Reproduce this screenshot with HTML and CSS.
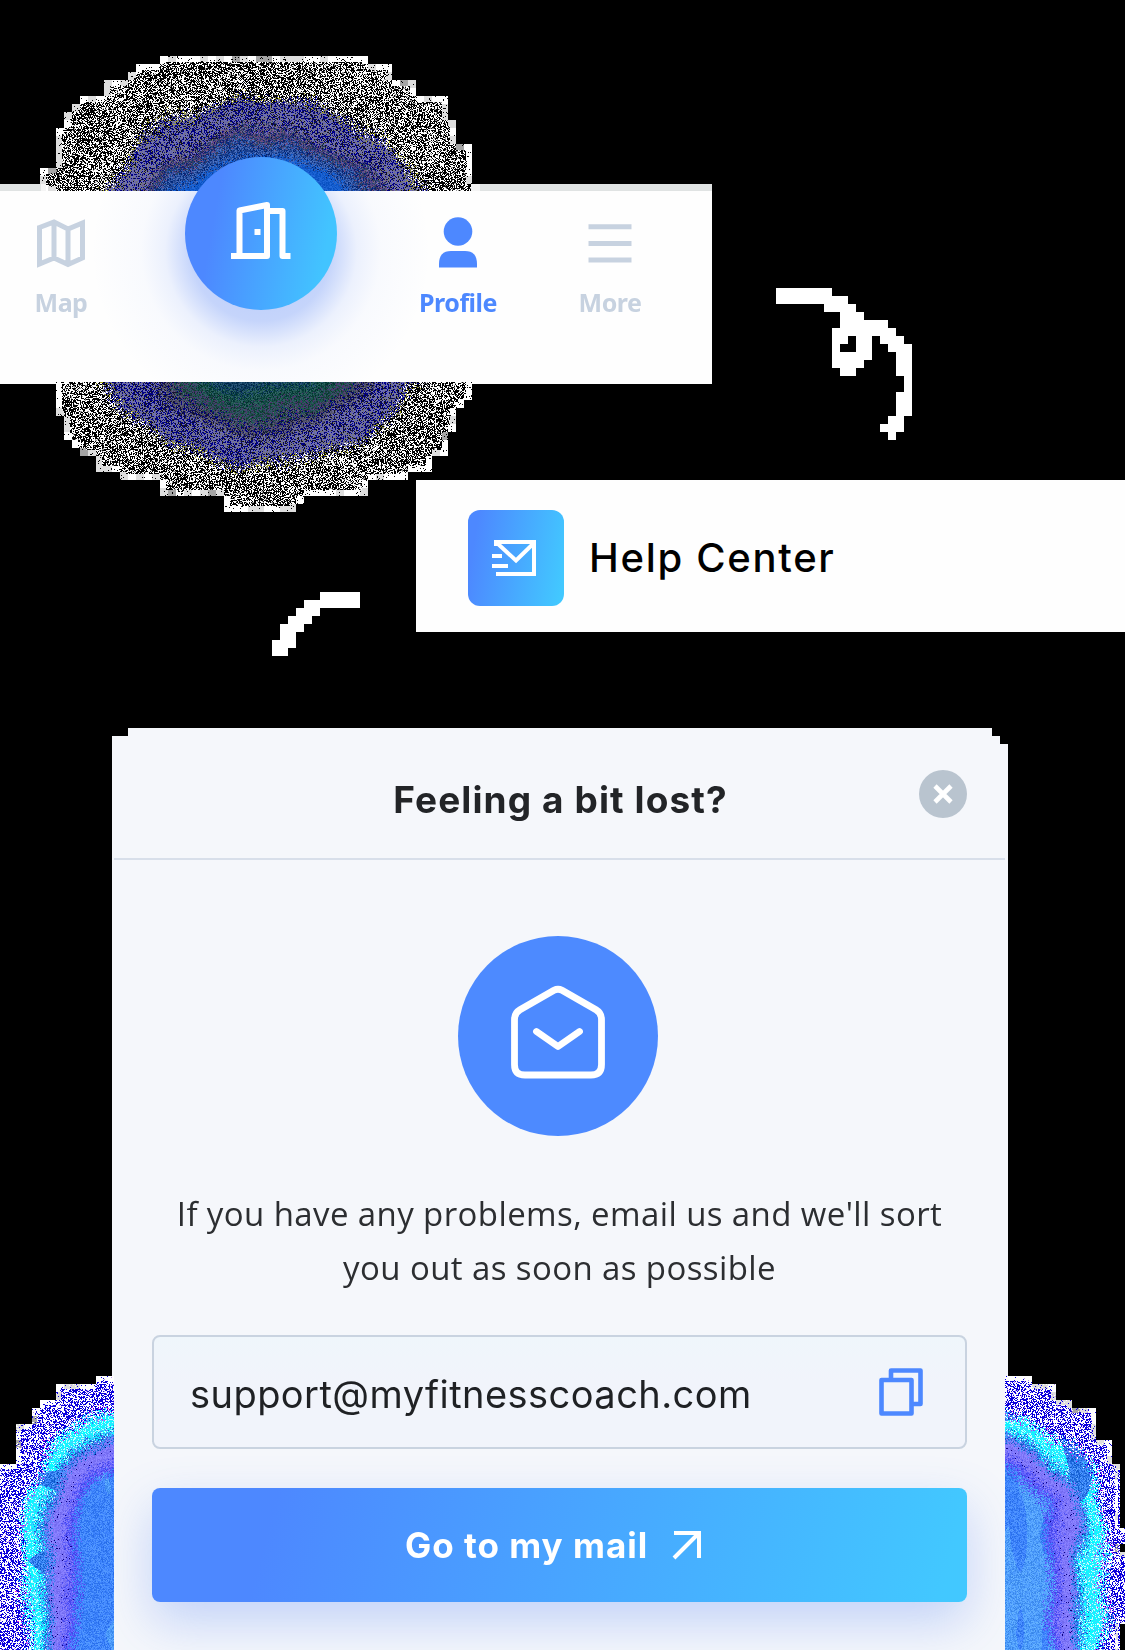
FILE: index.html
```
<!DOCTYPE html>
<html lang="en">
<head>
<meta charset="utf-8">
<title>Help Center</title>
<link rel="stylesheet" href="styles.css">
</head>
<body>
<canvas class="glow" id="glow" width="1125" height="1650"></canvas>
<svg class="squiggle squiggle-right" viewBox="0 0 17 19" aria-hidden="true"><path d="M0 0h7v1h-7zM0 1h9v1h-9zM6 2h4v1h-4zM8 3h3v1h-3zM8 4h6v1h-6zM7 5h8v1h-8zM7 6h2v1h-2zM10 6h2v1h-2zM13 6h3v1h-3zM7 7h1v1h-1zM10 7h2v1h-2zM14 7h3v1h-3zM7 8h5v1h-5zM7 9h4v1h-4zM15 8h2v3h-2zM8 10h2v1h-2zM16 11h1v2h-1zM15 13h2v3h-2zM14 16h2v1h-2zM13 17h3v1h-3zM14 18h1v1h-1z"/></svg>
<svg class="squiggle squiggle-left" viewBox="0 0 11 8" aria-hidden="true"><path d="M6 0h5v1h-5zM4 1h7v1h-7zM3 2h3v1h-3zM2 3h3v1h-3zM1 4h3v1h-3zM1 5h2v1h-2zM0 6h3v1h-3zM0 7h2v1h-2z"/></svg>
<main class="page">
  <nav class="tabs">
    <a class="tab tab-map">
      <svg width="50" height="50" viewBox="0 0 50 50"><path d="M3.500 9.500 18 4 32 11 46.500 5V40L32 46.500 18 40 3.500 46ZM18 4V40M32 11V46" fill="none" stroke="currentColor" stroke-width="5"/></svg>
      <span class="label">Map</span>
    </a>
    <a class="tab-door">
      <svg width="62" height="60" viewBox="0 0 62 60"><path d="M1 55H37V4L9.500 9.500V55M37 10H52.500V55H60.500" fill="none" stroke="#fff" stroke-width="6" stroke-linejoin="round"/><path d="M24.500 28h6v6h-6z" fill="#fff"/></svg>
    </a>
    <a class="tab tab-profile">
      <svg class="person" width="50" height="50" viewBox="0 0 50 50"><circle cx="25" cy="13.500" r="14.300" fill="currentColor"/><path d="M6 49.500V46Q6 33 18 33H32Q44 33 44 46V49.500Z" fill="currentColor"/></svg>
      <span class="label">Profile</span>
    </a>
    <a class="tab tab-more">
      <svg width="50" height="50" viewBox="0 0 50 50"><path d="M3.500 8.700H46.500M3.500 25.500H46.500M3.500 42H46.500" stroke="currentColor" stroke-width="5"/></svg>
      <span class="label">More</span>
    </a>
  </nav>

  <section class="help">
    <span class="help-icon">
      <svg width="44" height="36" viewBox="0 0 44 36"><path d="M4 6V2H42V34H4M5 3 24 20.500 42 3M0 16H10M0 26H16" fill="none" stroke="#fff" stroke-width="4"/></svg>
    </span>
    <span class="help-text">Help Center</span>
  </section>

  <section class="dialog">
    <header class="dialog-head">
      <h1 class="title">Feeling a bit lost?</h1>
      <button class="close" aria-label="Close"><svg width="20" height="20" viewBox="0 0 20 20"><path d="M2 2 18 18M18 2 2 18" stroke="#fff" stroke-width="4.600"/></svg></button>
    </header>
    <div class="dialog-body">
      <div class="badge">
        <svg width="96" height="96" viewBox="0 0 96 96"><path d="M43 6.300Q47 4.200 51 6.300L85 25.800Q90.500 29 90.500 35.500V80.500Q90.500 91 80 91H14Q3.500 91 3.500 80.500V35.500Q3.500 29 9 25.800ZM25.500 47.500 47 62.500 68.500 47.500" fill="none" stroke="#fff" stroke-width="6.800" stroke-linecap="round" stroke-linejoin="round"/></svg>
      </div>
      <p class="message">If you have any problems, email us and we'll sort<br>you out as soon as possible</p>
      <div class="field">
        <span class="email">support@myfitnesscoach.com</span>
        <svg width="44" height="48" viewBox="0 0 44 48"><path d="M2.500 12H32.500V45.500H2.500ZM12 12V2.500H41.500V36H32.500" fill="none" stroke="#4d88ff" stroke-width="4.600" stroke-linejoin="round"/></svg>
      </div>
      <button class="send"><span class="send-text">Go to my mail</span><svg width="30" height="30" viewBox="0 0 30 30"><path d="M2 3H27V28M27 3 2 28" fill="none" stroke="#fff" stroke-width="4"/></svg></button>
    </div>
  </section>
</main>
<script src="glow.js"></script>
</body>
</html>
```
FILE: styles.css
```
* { box-sizing: border-box; }
body {
  margin: 0;
  width: 1125px;
  height: 1650px;
  overflow: hidden;
  position: relative;
  background: #000;
  font-family: Inter, "Liberation Sans", sans-serif;
}
svg { display: block; flex: none; }
button { border: 0; padding: 0; font: inherit; }
.glow { position: absolute; left: 0; top: 0; }
.squiggle { position: absolute; fill: #fff; shape-rendering: crispEdges; }
.squiggle-right { left: 776px; top: 288px; width: 136px; height: 152px; }
.squiggle-left { left: 272px; top: 592px; width: 88px; height: 64px; }
.page { position: relative; display: flex; flex-direction: column; padding-top: 191px; }

.tabs {
  position: relative;
  width: 712px;
  height: 193px;
  padding: 27px 42px 0 1px;
  display: flex;
  background: #fefefe;
  clip-path: polygon(0 -60px, 100% -60px, 100% 100%, 472px 100%, 472px 191px, 56px 191px, 56px 100%, 0 100%);
}
.tab {
  width: 120px;
  display: flex;
  flex-direction: column;
  align-items: center;
  color: #c7d2e0;
}
.tab-profile { margin-left: 277px; color: #4d88ff; }
.tab-more { margin-left: 32px; }
.person { overflow: visible; }
.label {
  margin-top: 17px;
  font: 700 25px/34px "Noto Sans", sans-serif;
  letter-spacing: -0.500px;
  white-space: nowrap;
}
.tab-door {
  position: absolute;
  left: 185px;
  top: -34px;
  width: 152px;
  height: 153px;
  padding: 44px 0 0 45px;
  border-radius: 50%;
  background: linear-gradient(100deg, #4d88ff 22%, #42c4ff 88%);
}
.tab-door::before {
  content: "";
  position: absolute;
  left: -185px;
  top: 34px;
  width: 712px;
  height: 192px;
  z-index: -1;
  background: radial-gradient(circle at 261px 60px, rgba(77, 125, 245, .42) 0, rgba(77, 125, 245, .32) 70px, rgba(77, 125, 245, .1) 96px, rgba(77, 125, 245, .03) 120px, transparent 170px);
}

.help {
  align-self: flex-end;
  width: 709px;
  height: 152px;
  margin-top: 96px;
  padding-left: 52px;
  display: flex;
  align-items: center;
  background: #fefefe;
}
.help-icon {
  width: 96px;
  height: 96px;
  padding: 30px 0 0 24px;
  border-radius: 12px;
  margin-top: 4px;
  background: linear-gradient(100deg, #4d88ff 10%, #42c8ff 95%);
}
.help-text { margin: 3px 0 0 25px; font-size: 40px; font-weight: 500; line-height: 48px; letter-spacing: 1.700px; white-space: nowrap; }

.dialog {
  width: 896px;
  height: 922px;
  margin: 96px 0 0 112px;
  background: #f5f7fb;
  clip-path: polygon(16px 0, 880px 0, 880px 8px, 888px 8px, 888px 16px, 896px 16px, 896px 648px, 893px 648px, 893px 100%, 2px 100%, 2px 648px, 0 648px, 0 8px, 16px 8px);
}
.dialog-head {
  position: relative;
  height: 132px;
  margin: 0 3px 0 2px;
  padding-top: 47px;
  border-bottom: 2px solid #d8dfea;
  text-align: center;
}
.title { margin: 0; padding-left: 2px; font-size: 37px; font-weight: 700; line-height: 50px; letter-spacing: 1.100px; color: #222427; white-space: nowrap; }
.close {
  position: absolute;
  right: 38px;
  top: 42px;
  width: 48px;
  height: 48px;
  display: grid;
  place-items: center;
  border-radius: 50%;
  background: #b9c4cf;
}
.dialog-body { padding: 76px 41px 0 40px; display: flex; flex-direction: column; }
.badge {
  width: 200px;
  height: 200px;
  margin-left: 306px;
  padding: 48px 0 0 53px;
  border-radius: 50%;
  background: #4d8aff;
}
.message {
  margin: 51px 0 0;
  font: 400 33px/54px "Open Sans", "Noto Sans", sans-serif;
  letter-spacing: 0.400px;
  text-align: center;
  color: #2c2e31;
  white-space: nowrap;
}
.field {
  height: 114px;
  margin-top: 40px;
  padding: 0 42px 0 36px;
  display: flex;
  align-items: center;
  justify-content: space-between;
  border: 2px solid #c9d3e0;
  border-radius: 8px;
  background: linear-gradient(#eff6fb, #f1f4fb 40%);
}
.email { margin-top: 3px; font-size: 38px; letter-spacing: 0.450px; color: #1f2124; line-height: 48px; white-space: nowrap; }
.send {
  height: 114px;
  margin-top: 39px;
  display: flex;
  align-items: center;
  padding-left: 253px;
  border-radius: 8px;
  color: #fff;
  background: linear-gradient(105deg, #4d88ff 15%, #42c8ff 97%);
  box-shadow: 0 20px 50px rgba(77, 125, 245, .3);
}
.send-text { width: 267px; text-align: left; font-size: 35px; font-weight: 700; line-height: 44px; letter-spacing: 1px; white-space: nowrap; }
```
FILE: glow.js
```
// Paints the grainy halos behind the tab bar and the dialog.
const canvas = document.getElementById("glow");
const ctx = canvas.getContext("2d");
const image = ctx.createImageData(1125, 1650);
let seed = 12345;
function rand() {
  seed = (seed * 1664525 + 1013904223) >>> 0;
  return seed / 4294967296;
}
function put(x, y, c) {
  const i = (y * 1125 + x) * 4;
  image.data[i] = c[0];
  image.data[i + 1] = c[1];
  image.data[i + 2] = c[2];
  image.data[i + 3] = 255;
}
const pick = (list) => list[Math.floor(rand() * list.length)];
const shade = (c, n) => { const d = (rand() - 0.5) * n; return c.map((v) => v + d); };

// Smoothly interpolated lattice noise, -0.5 to 0.5.
function lattice(i, j) {
  const s = Math.sin(i * 127.1 + j * 311.7) * 43758.5453;
  return s - Math.floor(s);
}
function drift(x, y, size) {
  const u = x / size, v = y / size, i = Math.floor(u), j = Math.floor(v), a = u - i, b = v - j;
  const top = lattice(i, j) * (1 - a) + lattice(i + 1, j) * a;
  const low = lattice(i, j + 1) * (1 - a) + lattice(i + 1, j + 1) * a;
  return top * (1 - b) + low * b - 0.5;
}

// Each row: first y, left x, right x of the stepped outline.
const round = [[56,160,368],[64,136,392],[72,128,392],[80,104,416],[96,80,448],[104,72,448],[112,64,448],[120,64,456],[128,56,456],[144,56,472],[168,40,472],[184,40,480],[192,56,472],[400,56,464],[408,56,456],[416,64,456],[432,64,448],[440,72,448],[448,80,448],[456,96,432],[472,120,408],[480,160,368],[496,224,304],[504,224,296],[512,0,0]];
const left = [[1376,96,114],[1384,56,114],[1400,40,114],[1408,32,114],[1424,16,114],[1464,0,114]];
const right = [[1376,1005,1032],[1384,1005,1056],[1400,1005,1072],[1408,1005,1096],[1440,1005,1112],[1464,1005,1120],[1528,1005,1125],[1544,1005,1120],[1552,1005,1125],[1624,1005,1120]];

function inside(rows, x, y) {
  let hit = null;
  for (const r of rows) if (y >= r[0]) hit = r;
  return hit !== null && x >= hit[1] && x < hit[2];
}
const white = [255, 255, 255], black = [0, 0, 0];

function edge(rows, x, y) {
  const reach = 6;
  return !inside(rows, x, y - reach) || !inside(rows, x - reach, y) || !inside(rows, x + reach, y) || !inside(rows, x, y + reach);
}
function edgeTone(x, y) {
  const n = lattice(Math.floor(x / 8), Math.floor(y / 8));
  return n < 0.12 ? [165, 165, 165] : n < 0.45 ? [222, 222, 222] : white;
}
for (let y = 56; y < 512; y++) {
  for (let x = 40; x < 480; x++) {
    if (!inside(round, x, y)) continue;
    const r = Math.hypot(x - 262, y - 281) + (rand() - 0.5) * 14 + drift(x, y, 24) * 16;
    const dim = drift(x, y, 18) * 0.3;
    let c;
    if (edge(round, x, y)) c = rand() < 0.95 ? edgeTone(x, y) : black;
    else if (r > 186) c = rand() < 0.52 + dim * 0.5 ? black : rand() < 0.85 ? white : [150, 150, 150];
    else if (r > 182) c = pick([[170, 170, 20], [0, 0, 150], black, [110, 110, 120], [130, 130, 140]]);
    else if (r > 152) c = rand() < 0.42 + dim ? pick([[0, 0, 140], [0, 0, 120], [20, 20, 30]]) : pick([[105, 105, 170], [110, 110, 190], [115, 115, 125]]);
    else if (y > 300) {
      if (r > 138) c = pick([[0, 0, 130], [80, 80, 110], [95, 95, 125], [20, 20, 50], [70, 70, 90]]);
      else if (r > 122 || Math.abs(x - 262) > 72) c = pick([[30, 70, 75], [60, 75, 110], [20, 60, 50], [80, 50, 110], [30, 90, 80]]);
      else c = shade(r > 110 ? [22, 76, 72] : [18, 62, 96], 60);
    }
    else if (r > 139) c = pick([[60, 60, 90], [80, 70, 140], [20, 30, 110], [110, 80, 130], [40, 70, 110]]);
    else if (r > 124) c = shade([38, 76, 155], 85);
    else c = shade([20, 92, 205], 30);
    put(x, y, c);
  }
}

// The two end caps of the halo below the dialog share one set of bands.
function cap(rows, x0, x1, cx, side) {
  for (let y = 1376; y < 1650; y++) {
    for (let x = x0; x < x1; x++) {
      if (!inside(rows, x, y)) continue;
      const dx = Math.max(0, (cx - x) * side), dy = Math.max(0, 1531 - y);
      const t = 157 - (dx && dy ? Math.hypot(dx, dy) : Math.max(dx, dy)) + (rand() - 0.5) * 14 + drift(x, y, 30) * 18;
      const rim = !inside(rows, x, Math.max(1376, y - 5)) || (side > 0 ? x > 6 && !inside(rows, x - 5, y) : x < 1118 && !inside(rows, x + 5, y)) || (y < 1381);
      let c;
      if (rim && rand() < 0.85) c = edgeTone(x, y);
      else if (t < 30) c = rand() < 0.47 ? [10, 0, 220] : rand() < 0.9 ? white : [190, 150, 240];
      else if (t < 33) c = pick([[230, 30, 240], [80, 100, 255], white, [40, 220, 255]]);
      else if (t < 50) c = drift(x, y, 40) < -0.2 ? shade([50, 125, 240], 80) : pick([[0, 255, 255], [30, 240, 255], [190, 255, 255], [60, 215, 255]]);
      else if (t < 58) c = shade([50, 125, 235], 80);
      else if (t < 76) c = rand() < 0.03 ? [10, 0, 130] : shade([128, 120, 252], 34);
      else if (t < 86) c = shade([88, 88, 252], 50);
      else c = shade(drift(x, y / 4, 12) > 0.05 ? [78, 156, 255] : [62, 132, 255], 50);
      put(x, y, c);
    }
  }
}
cap(left, 0, 114, 150, 1);
cap(right, 1005, 1125, 976, -1);

// Pale lip along the top of the tab bar.
for (let y = 184; y < 192; y++) {
  for (let x = 0; x < 712; x++) {
    if (x < 46 || x > 470) put(x, y, x > 40 && x < 480 ? [245, 245, 245] : [224, 227, 227]);
  }
}
ctx.putImageData(image, 0, 0);
```
